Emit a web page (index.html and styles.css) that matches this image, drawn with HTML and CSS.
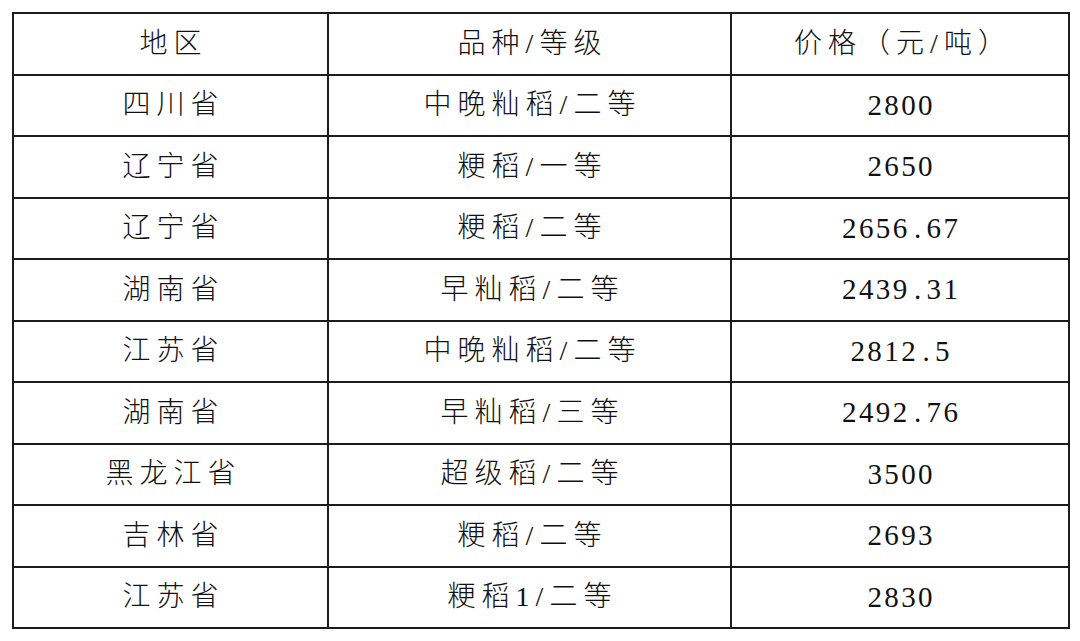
FILE: index.html
```html
<!DOCTYPE html>
<html lang="zh-CN">
<head>
<meta charset="utf-8">
<title>稻谷价格</title>
<link rel="stylesheet" href="styles.css">
</head>
<body>
<table class="price-table">
  <colgroup>
    <col class="c1"><col class="c2"><col class="c3">
  </colgroup>
  <thead>
    <tr><th>地区</th><th>品种/等级</th><th>价格（元/吨）</th></tr>
  </thead>
  <tbody>
    <tr><td>四川省</td><td>中晚籼稻/二等</td><td class="num">2800</td></tr>
    <tr><td>辽宁省</td><td>粳稻/一等</td><td class="num">2650</td></tr>
    <tr><td>辽宁省</td><td>粳稻/二等</td><td class="num">2656<span class="dot">.</span>67</td></tr>
    <tr><td>湖南省</td><td>早籼稻/二等</td><td class="num">2439<span class="dot">.</span>31</td></tr>
    <tr><td>江苏省</td><td>中晚籼稻/二等</td><td class="num">2812<span class="dot">.</span>5</td></tr>
    <tr><td>湖南省</td><td>早籼稻/三等</td><td class="num">2492<span class="dot">.</span>76</td></tr>
    <tr><td>黑龙江省</td><td>超级稻/二等</td><td class="num">3500</td></tr>
    <tr><td>吉林省</td><td>粳稻/二等</td><td class="num">2693</td></tr>
    <tr><td>江苏省</td><td>粳稻1/二等</td><td class="num">2830</td></tr>
  </tbody>
</table>
</body>
</html>
```
FILE: styles.css
```css
html, body {
  margin: 0;
  padding: 0;
  background: #ffffff;
}

.price-table {
  margin: 12px 0 0 12px;
  width: 1056px;
  border-collapse: collapse;
  table-layout: fixed;
  border: 2px solid #1c1c1c;
  color: #111111;
}

.c1 { width: 315px; }
.c2 { width: 403px; }
.c3 { width: 338px; }

.price-table th,
.price-table td {
  border: 2px solid #1c1c1c;
  height: 59.5px;
  padding: 0;
  text-align: center;
  vertical-align: middle;
  font-family: "Liberation Serif", "Noto Sans CJK SC", serif;
  font-size: 28px;
  font-weight: 300;
  letter-spacing: 6px;
  text-indent: 6px;
  line-height: 1;
}

.price-table td.num {
  font-family: "Liberation Serif", serif;
  font-size: 29px;
  font-weight: 400;
  letter-spacing: 2.4px;
  text-indent: 2.4px;
}

.dot {
  display: inline-block;
  width: 17px;
  padding-left: 2px;
  box-sizing: border-box;
  text-align: left;
}
```
